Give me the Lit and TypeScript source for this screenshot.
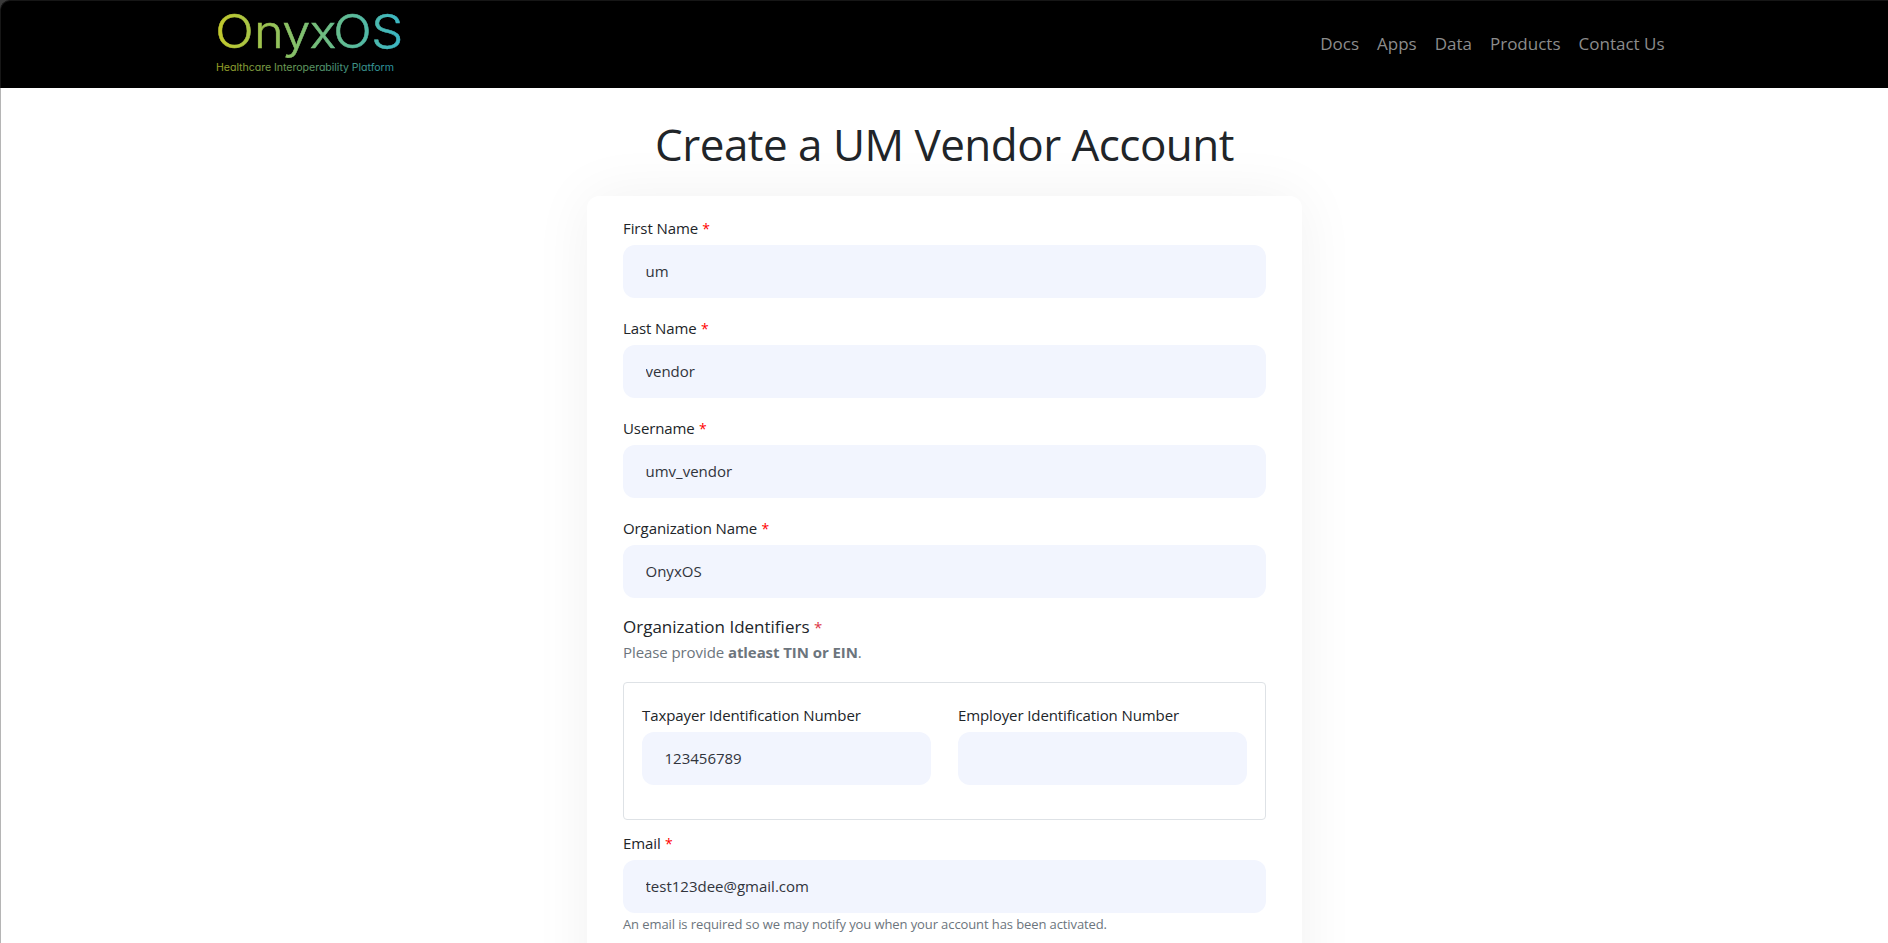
import { LitElement, css, html, nothing } from 'lit';
import { customElement, property } from 'lit/decorators.js';

@customElement('form-field')
export class FormField extends LitElement {
  @property() label = '';
  @property() value = '';
  @property() hint = '';
  @property({ type: Boolean }) required = false;

  static styles = css`
    :host {
      display: block;
    }

    .label {
      display: block;
      height: 17px;
      line-height: 17px;
      margin-bottom: 8px;
      font-size: 15px;
      letter-spacing: -0.1px;
      color: #212529;
      white-space: nowrap;
    }

    .required {
      margin-left: 0.5px;
      font-size: 14px;
      color: #ff0000;
    }

    .input {
      display: block;
      box-sizing: border-box;
      width: 100%;
      height: 53px;
      padding: 0 22px 2px 22.5px;
      border: 0;
      border-radius: 12px;
      background: #f2f5fe;
      color: #31343c;
      font-family: inherit;
      font-size: 15px;
      outline: none;
    }

    .hint {
      margin-top: 2px;
      font-size: 13px;
      line-height: 18px;
      letter-spacing: -0.1px;
      color: #6c757d;
      white-space: nowrap;
    }
  `;

  render() {
    return html`
      <label class="label" for="input"
        >${this.label}${this.required ? html` <span class="required">*</span>` : nothing}</label
      >
      <input class="input" id="input" .value=${this.value} />
      ${this.hint ? html`<div class="hint">${this.hint}</div>` : nothing}
    `;
  }
}

@customElement('site-header')
export class SiteHeader extends LitElement {
  static styles = css`
    :host {
      display: block;
      background: linear-gradient(#3a3a3a 50%, #000 50%);
    }

    .bar {
      display: flex;
      align-items: flex-start;
      justify-content: space-between;
      box-sizing: border-box;
      height: 88px;
      padding: 0 223px 0 209px;
      border-top: 1px solid #161616;
      border-left: 1px solid #161616;
      border-top-left-radius: 10px;
      background: #000;
    }

    .logo {
      display: block;
      width: 220px;
      height: 79px;
      overflow: visible;
    }

    .wordmark {
      font-family: Inter, sans-serif;
      font-size: 46px;
      font-weight: 300;
      stroke: url(#brand);
      stroke-width: 0.5px;
    }

    .tagline {
      font-family: Inter, sans-serif;
      font-size: 10.6px;
      font-feature-settings: 'cv11';
      opacity: 0.8;
    }

    .nav {
      display: flex;
      gap: 18px;
      padding: 30px 0.5px 0 0;
      line-height: 25px;
    }

    .link {
      color: #8c8c8c;
      font-size: 17px;
      text-decoration: none;
      white-space: nowrap;
    }
  `;

  private links = ['Docs', 'Apps', 'Data', 'Products', 'Contact Us'];

  render() {
    return html`
      <header class="bar">
        <svg class="logo" viewBox="0 0 220 79">
          <defs>
            <linearGradient id="brand" gradientUnits="userSpaceOnUse" x1="6" y1="0" x2="188" y2="0">
              <stop offset="0" stop-color="#c3c92b" />
              <stop offset="0.5" stop-color="#74bd7b" />
              <stop offset="1" stop-color="#2fb6d3" />
            </linearGradient>
          </defs>
          <text
            class="wordmark"
            fill="url(#brand)"
            transform="scale(1.1 1)"
            x="4.7 40 65.8 90.5 112 146.5"
            y="47.5"
          >OnyxOS</text>
          <text class="tagline" fill="url(#brand)" x="6" y="70" textLength="178">
            Healthcare Interoperability Platform
          </text>
        </svg>
        <nav class="nav">
          ${this.links.map((link) => html`<a class="link" href="#">${link}</a>`)}
        </nav>
      </header>
    `;
  }
}

@customElement('app-root')
export class AppRoot extends LitElement {
  static styles = css`
    :host {
      display: flex;
      flex-direction: column;
      height: 943px;
      overflow: hidden;
      background: #fff;
      color: #212529;
      font-family: 'Open Sans', 'Noto Sans', sans-serif;
    }

    .page {
      flex: 1;
      min-height: 0;
      display: flex;
      flex-direction: column;
      align-items: center;
      border-left: 1px solid #b5b5b5;
    }

    .title {
      margin: 29px 0 25px;
      font-size: 44px;
      font-weight: 400;
      line-height: 54px;
      letter-spacing: -0.52px;
      white-space: nowrap;
    }

    .card {
      box-sizing: border-box;
      flex: none;
      width: 715px;
      height: 1100px;
      padding: 24px 36px;
      border-radius: 12px;
      background: #fff;
      box-shadow: 0 0 60px rgba(0, 0, 0, 0.06);
    }

    .fields {
      display: grid;
      gap: 22px;
    }

    .section {
      margin-top: 16px;
      font-size: 17px;
      line-height: 26px;
    }

    .required {
      font-size: 15px;
      color: #dc3545;
    }

    .note {
      font-size: 15px;
      line-height: 24px;
      letter-spacing: -0.08px;
      color: #6c757d;
    }

    .identifiers {
      display: grid;
      grid-template-columns: 1fr 1fr;
      gap: 27px;
      box-sizing: border-box;
      height: 138px;
      margin: 18px 0 15px;
      padding: 24px 18px;
      border: 1px solid #dee2e6;
      border-radius: 4px;
    }
  `;

  private names = [
    { label: 'First Name', value: 'um' },
    { label: 'Last Name', value: 'vendor' },
    { label: 'Username', value: 'umv_vendor' },
    { label: 'Organization Name', value: 'OnyxOS' },
  ];

  render() {
    return html`
      <site-header></site-header>
      <main class="page">
        <h1 class="title">Create a UM Vendor Account</h1>
        <form class="card">
          <div class="fields">
            ${this.names.map(
              ({ label, value }) =>
                html`<form-field label=${label} value=${value} required></form-field>`
            )}
          </div>
          <div class="section">Organization Identifiers <span class="required">*</span></div>
          <div class="note">Please provide <b>atleast TIN or EIN</b>.</div>
          <div class="identifiers">
            <form-field label="Taxpayer Identification Number" value="123456789"></form-field>
            <form-field label="Employer Identification Number"></form-field>
          </div>
          <form-field
            label="Email"
            value="test123dee@gmail.com"
            hint="An email is required so we may notify you when your account has been activated."
            required
          ></form-field>
        </form>
      </main>
    `;
  }
}

declare global {
  interface HTMLElementTagNameMap {
    'form-field': FormField;
    'site-header': SiteHeader;
    'app-root': AppRoot;
  }
}
